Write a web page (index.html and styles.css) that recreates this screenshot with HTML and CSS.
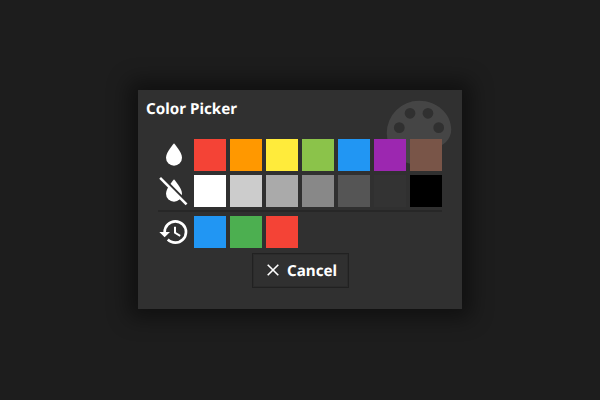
FILE: index.html
```html
<!DOCTYPE html>
<html lang="en">
<head>
<meta charset="utf-8">
<title>Color Picker</title>
<link rel="stylesheet" href="styles.css">
</head>
<body>
<main class="dialog">
  <svg class="watermark" viewBox="0 0 24 24"><path d="M17.5,12A1.5,1.5 0 0,1 16,10.5A1.5,1.5 0 0,1 17.5,9A1.5,1.5 0 0,1 19,10.5A1.5,1.5 0 0,1 17.5,12M14.5,8A1.5,1.5 0 0,1 13,6.5A1.5,1.5 0 0,1 14.5,5A1.5,1.5 0 0,1 16,6.5A1.5,1.5 0 0,1 14.5,8M9.5,8A1.5,1.5 0 0,1 8,6.5A1.5,1.5 0 0,1 9.5,5A1.5,1.5 0 0,1 11,6.5A1.5,1.5 0 0,1 9.5,8M6.5,12A1.5,1.5 0 0,1 5,10.5A1.5,1.5 0 0,1 6.5,9A1.5,1.5 0 0,1 8,10.5A1.5,1.5 0 0,1 6.5,12M12,3A9,9 0 0,0 3,12A9,9 0 0,0 12,21A1.5,1.5 0 0,0 13.5,19.5C13.5,19.11 13.35,18.76 13.11,18.5C12.88,18.23 12.73,17.88 12.73,17.5A1.5,1.5 0 0,1 14.23,16H16A5,5 0 0,0 21,11C21,6.58 16.97,3 12,3Z"/></svg>
  <h1 class="title">Color Picker</h1>
  <div class="palette">
    <div class="row">
      <svg class="icon" viewBox="0 0 24 24"><path d="M12,20A6,6 0 0,1 6,14C6,10 12,3.25 12,3.25C12,3.25 18,10 18,14A6,6 0 0,1 12,20Z"/></svg>
      <span class="swatch red"></span><span class="swatch orange"></span><span class="swatch yellow"></span><span class="swatch lime"></span><span class="swatch blue"></span><span class="swatch purple"></span><span class="swatch brown"></span>
    </div>
    <div class="row">
      <svg class="icon" viewBox="0 0 24 24"><path d="M12,20A6,6 0 0,1 6,14C6,10 12,3.25 12,3.25C12,3.25 18,10 18,14A6,6 0 0,1 12,20Z"/><path class="cut" d="M3 1.7L23 21.7"/><path class="slash" d="M1.6 2.2L21.4 22"/></svg>
      <span class="swatch white"></span><span class="swatch gray-1"></span><span class="swatch gray-2"></span><span class="swatch gray-3"></span><span class="swatch gray-4"></span><span class="swatch gray-5"></span><span class="swatch black"></span>
    </div>
    <hr class="rule">
    <div class="row">
      <svg class="icon" viewBox="0 0 24 24"><path d="M13.5,8H12V13L16.28,15.54L17,14.33L13.5,12.25V8M13,3A9,9 0 0,0 4,12H1L4.96,16.03L9,12H6A7,7 0 0,1 13,5A7,7 0 0,1 20,12A7,7 0 0,1 13,19C11.07,19 9.32,18.21 8.06,16.94L6.64,18.36C8.27,20 10.5,21 13,21A9,9 0 0,0 22,12A9,9 0 0,0 13,3"/></svg>
      <span class="swatch blue"></span><span class="swatch green"></span><span class="swatch red"></span>
    </div>
  </div>
  <button class="cancel"><svg class="close" viewBox="0 0 12 12"><path d="M.7 .7L11.3 11.3M11.3 .7L.7 11.3"/></svg>Cancel</button>
</main>
</body>
</html>
```
FILE: styles.css
```css
body {
  display: flex;
  align-items: flex-start;
  justify-content: center;
  margin: 0;
  height: 400px;
  background: #1d1d1d;
  font-family: "Noto Sans", sans-serif;
  text-rendering: geometricPrecision;
  color: #fff;
}
.dialog {
  position: relative;
  display: flex;
  box-sizing: border-box;
  flex-direction: column;
  width: 324px;
  height: 219px;
  margin-top: 90px;
  padding: 9px 20px 0;
  background: #303030;
  box-shadow: 0 0 20px 9px rgba(0, 0, 0, .45);
}
.watermark {
  position: absolute;
  top: 0;
  right: 0;
  width: 86px;
  height: 86px;
  fill: #454545;
}
.title {
  margin: 0 -12px 19px;
  font-size: 15.2px;
  line-height: 21px;
  font-weight: 700;
}
.palette {
  position: relative;
  display: flex;
  flex-direction: column;
  gap: 4px;
}
.row { display: flex; gap: 4px; height: 32px; }
.icon { width: 32px; height: 32px; fill: #fff; }
.cut { stroke: #303030; stroke-width: 2; }
.slash { stroke: #fff; stroke-width: 1.9; }
.rule {
  width: 284px;
  height: 2px;
  margin: -1px 0 0;
  border: 0;
  background: #272727;
}
.swatch { width: 32px; height: 32px; }
.red { background: #f44336; }
.orange { background: #ff9800; }
.yellow { background: #ffeb3b; }
.lime { background: #8bc34a; }
.blue { background: #2196f3; }
.green { background: #4caf50; }
.purple { background: #9c27b0; }
.brown { background: #795548; }
.white { background: #fff; }
.gray-1 { background: #ccc; }
.gray-2 { background: #aaa; }
.gray-3 { background: #888; }
.gray-4 { background: #555; }
.gray-5 { background: #333; }
.black { background: #000; }
.cancel {
  display: flex;
  align-items: center;
  gap: 8px;
  box-sizing: border-box;
  width: 97px;
  height: 35px;
  margin: 5px 0 0 94px;
  padding: 0 0 0 14px;
  border: 1px solid #212121;
  box-shadow: inset 0 0 0 1px #2b2b2b;
  background: #303030;
  color: #fff;
  font: 700 15.2px "Noto Sans", sans-serif;
  text-rendering: geometricPrecision;
}
.close { width: 12px; height: 12px; margin-bottom: 1px; fill: none; stroke: #fff; stroke-width: 1.6; }
```
